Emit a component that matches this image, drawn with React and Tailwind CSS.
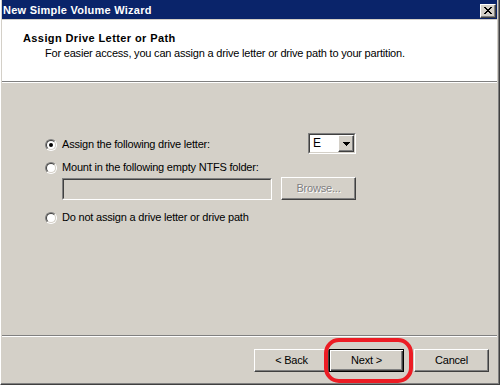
import React from "react";

const raised =
  "border border-t-white border-l-white border-r-[#404040] border-b-[#404040] shadow-[inset_-1px_-1px_0_#808080]";

function Radio({ checked }) {
  return (
    <div className="w-[12px] h-[12px] rounded-full border border-t-[#808080] border-l-[#808080] border-r-white border-b-white shrink-0">
      <div className="w-full h-full rounded-full border border-t-[#404040] border-l-[#404040] border-r-[#d4d0c8] border-b-[#d4d0c8] bg-white flex items-center justify-center">
        {checked && <div className="w-[4px] h-[4px] rounded-full bg-black" />}
      </div>
    </div>
  );
}

function Button({ children, disabled, isDefault, ring }) {
  const cls = isDefault
    ? "border border-black shadow-[inset_1px_1px_0_#fff,inset_-1px_-1px_0_#404040,inset_-2px_-2px_0_#808080]"
    : raised;
  return (
    <div className={`relative w-[75px] h-[23px] bg-[#d4d0c8] flex items-center justify-center ${cls}`}>
      <span
        className={
          disabled
            ? "text-[#808080] [text-shadow:1px_1px_0_#fff]"
            : "text-black"
        }
      >
        {children}
      </span>
      {ring && (
        <span className="absolute left-[-6px] right-[-10px] top-[-12px] bottom-[-12px] border-[4px] border-[#ec1c24] rounded-[15px]" />
      )}
    </div>
  );
}

export default function App() {
  return (
    <div className="w-[500px] h-[385px] flex border-l border-r border-b border-l-white border-r-[#404040] border-b-[#404040] bg-[#d4d0c8] font-['Liberation_Sans',Arial,sans-serif] text-[11px] leading-[13px] tracking-[-0.2px] text-black">
      <div className="flex-1 flex flex-col border-r border-b border-r-[#808080] border-b-[#808080] pl-px pr-px">
        {/* Title bar */}
        <div className="h-[19px] bg-[#0a246a] flex items-center justify-between pl-px pr-[1px] shrink-0">
          <span className="text-white font-bold tracking-[0.25px] pt-[2px]">New Simple Volume Wizard</span>
          <div className={`w-[16px] h-[14px] bg-[#d4d0c8] flex items-center justify-center mt-[2px] ${raised}`}>
            <svg width="8" height="7" viewBox="0 0 8 7" shapeRendering="crispEdges">
              <path d="M0 0h2v1H0zM6 0h2v1H6zM1 1h2v1H1zM5 1h2v1H5zM2 2h4v1H2zM3 3h2v1H3zM2 4h4v1H2zM1 5h2v1H1zM5 5h2v1H5zM0 6h2v1H0zM6 6h2v1H6z" fill="#000" />
            </svg>
          </div>
        </div>

        {/* Header */}
        <div className="mt-px h-[62px] bg-white border-b border-b-[#808080] shadow-[0_1px_0_#fff] shrink-0 pl-[21px] pt-[12px]">
          <div className="font-bold tracking-[0.4px]">Assign Drive Letter or Path</div>
          <div className="mt-[2px] pl-[22px]">
            For easier access, you can assign a drive letter or drive path to your partition.
          </div>
        </div>

        {/* Content */}
        <div className="flex-1 mt-px pl-[43px] pt-[50px] flex flex-col">
          <div className="flex items-start">
            <div className="w-[263px] pt-[5px] flex items-center gap-[5px] h-[18px]">
              <Radio checked />
              <span>Assign the following drive letter:</span>
            </div>
            <div className="w-[48px] h-[21px] border border-t-[#808080] border-l-[#808080] border-r-white border-b-white">
              <div className="w-full h-full border border-t-[#404040] border-l-[#404040] border-r-[#d4d0c8] border-b-[#d4d0c8] bg-white flex">
                <span className="flex-1 pl-[3px] leading-[17px] text-[12px]">E</span>
                <div className={`w-[16px] h-[17px] bg-[#d4d0c8] flex items-center justify-center ${raised}`}>
                  <svg width="7" height="4" viewBox="0 0 7 4" shapeRendering="crispEdges">
                    <path d="M0 0h7v1H0zM1 1h5v1H1zM2 2h3v1H2zM3 3h1v1H3z" fill="#000" />
                  </svg>
                </div>
              </div>
            </div>
          </div>

          <div className="mt-[7px] flex items-center gap-[5px] h-[13px]">
            <Radio />
            <span>Mount in the following empty NTFS folder:</span>
          </div>

          <div className="mt-[4px] pl-[17px] flex items-start">
            <div className="w-[210px] h-[22px] border border-t-[#808080] border-l-[#808080] border-r-white border-b-white">
              <div className="w-full h-full border border-t-[#404040] border-l-[#404040] border-r-[#d4d0c8] border-b-[#d4d0c8] bg-[#d4d0c8]" />
            </div>
            <div className="ml-[9px] -mt-px">
              <Button disabled>Browse...</Button>
            </div>
          </div>

          <div className="mt-[11px] flex items-center gap-[5px] h-[13px]">
            <Radio />
            <span>Do not assign a drive letter or drive path</span>
          </div>
        </div>

        {/* Separator */}
        <div className="h-px bg-[#808080] shrink-0" />
        <div className="h-px bg-white shrink-0" />

        {/* Buttons */}
        <div className="h-[46px] shrink-0 flex justify-end items-start pt-[12px] pr-[8px]">
          <Button>&lt; Back</Button>
          <Button isDefault ring>Next &gt;</Button>
          <div className="ml-[10px]">
            <Button>Cancel</Button>
          </div>
        </div>
      </div>
    </div>
  );
}
